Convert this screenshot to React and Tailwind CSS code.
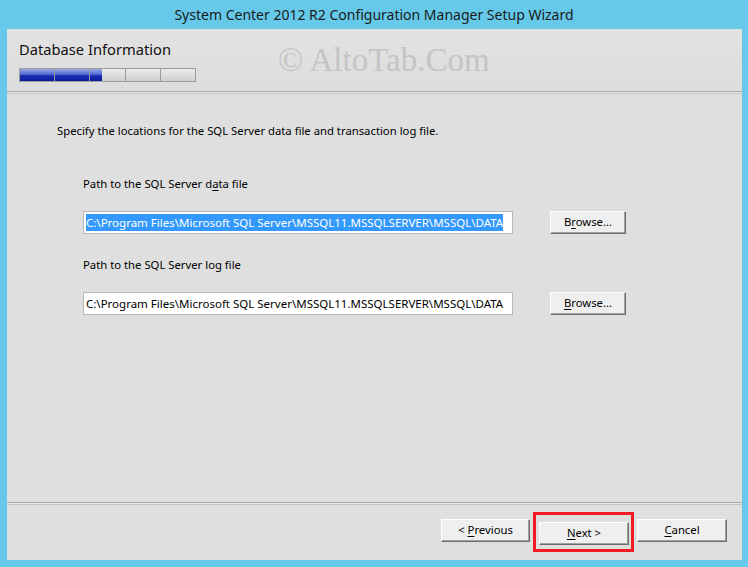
const font = { fontFamily: '"Noto Sans", "Open Sans", sans-serif' }

function Segment({ fill }) {
  // fill: 0..1 portion of blue
  return (
    <div className="relative h-full flex-1 overflow-hidden bg-[linear-gradient(#ececec,#dcdcdc_50%,#cfcfcf)]">
      {fill > 0 && (
        <div
          className="absolute left-0 top-0 h-full bg-[linear-gradient(#9aa8e6,#5468d0_45%,#1a2fb0_55%,#0a1c9e)]"
          style={{ width: `${fill * 100}%` }}
        />
      )}
    </div>
  )
}

function Btn({ children, className = '' }) {
  return (
    <button
      className={`h-[23px] border border-t-white border-l-white border-r-[#6e6e6e] border-b-[#6e6e6e] bg-[#efefef] text-[11.3px] text-black shadow-[inset_-1px_-1px_0_#a0a0a0] ${className}`}
      style={font}
    >
      {children}
    </button>
  )
}

const path = 'C:\\Program Files\\Microsoft SQL Server\\MSSQL11.MSSQLSERVER\\MSSQL\\DATA'

export default function App() {
  return (
    <div className="flex h-[567px] w-[748px] flex-col bg-[#66c9ea]" style={font}>
      {/* title bar */}
      <div className="flex h-[29px] items-center justify-center pb-[1px] text-[14px] text-[#1a1a1a]">
        System Center 2012 R2 Configuration Manager Setup Wizard
      </div>

      {/* client */}
      <div className="mb-[7px] ml-[7px] mr-[6px] flex flex-1 flex-col bg-[#dfdfdf]">
        {/* header */}
        <div className="relative h-[62px] bg-[linear-gradient(#e2e2e2,#dddddd)] pl-[12px] pt-[10px]">
          <div className="text-[14.7px] leading-[20px] text-[#111]">Database Information</div>
          <div className="mt-[9px] flex h-[14px] w-[177px] gap-[1px] border border-[#9c9c9c] bg-[#9c9c9c]">
            <Segment fill={1} />
            <Segment fill={1} />
            <Segment fill={0.33} />
            <Segment fill={0} />
            <Segment fill={0} />
          </div>
          <div
            className="absolute left-[271px] top-[12px] whitespace-nowrap text-[33px] leading-[38px] text-[#c4c4c4]"
            style={{ fontFamily: '"Liberation Serif", serif' }}
          >
            © AltoTab.Com
          </div>
        </div>
        <div className="h-[3px] border-t border-b border-t-[#a8a8a8] border-b-[#c4c4c4] bg-[#e8e8e8]" />

        {/* body */}
        <div className="flex-1 pl-[50px] pt-[29px] text-[11.3px] text-black">
          <div className="leading-[16px]">Specify the locations for the SQL Server data file and transaction log file.</div>

          <div className="pl-[26px]">
            <div className="mt-[37px] leading-[16px]">
              Path to the SQL Server d<span className="underline underline-offset-2">a</span>ta file
            </div>
            <div className="mt-[19px] flex items-center">
              <div className="flex h-[23px] w-[430px] items-center overflow-hidden whitespace-nowrap border border-[#b8b8b8] bg-white px-[2px] text-[11.5px]">
                <span className="bg-[#3399ff] leading-[17px] text-white">{path}</span>
              </div>
              <Btn className="ml-[37px] w-[76px]">
                B<span className="underline underline-offset-2">r</span>owse...
              </Btn>
            </div>

            <div className="mt-[23px] leading-[16px]">Path to the SQL Server log file</div>
            <div className="mt-[19px] flex items-center">
              <div className="flex h-[23px] w-[430px] items-center overflow-hidden whitespace-nowrap border border-[#b8b8b8] bg-white px-[2px] text-[11.5px]">
                <span className="leading-[17px]">{path}</span>
              </div>
              <Btn className="ml-[37px] w-[76px]">
                <span className="underline underline-offset-2">B</span>rowse...
              </Btn>
            </div>
          </div>
        </div>

        <div className="h-[3px] border-t border-b border-t-[#a8a8a8] border-b-[#c4c4c4] bg-[#e8e8e8]" />

        {/* footer */}
        <div className="flex h-[55px] items-start justify-end pr-[15px] pt-[14px]">
          <Btn className="w-[89px]">
            &lt; <span className="underline underline-offset-2">P</span>revious
          </Btn>
          <div className="relative ml-[9px]">
            <Btn className="w-[90px]">
              <span className="underline underline-offset-2">N</span>ext &gt;
            </Btn>
            <div className="pointer-events-none absolute -left-[6px] -right-[5px] -top-[7px] -bottom-[7px] border-[3px] border-[#ee1c25]" />
          </div>
          <Btn className="ml-[8px] w-[90px]">
            <span className="underline underline-offset-2">C</span>ancel
          </Btn>
        </div>
      </div>
    </div>
  )
}
